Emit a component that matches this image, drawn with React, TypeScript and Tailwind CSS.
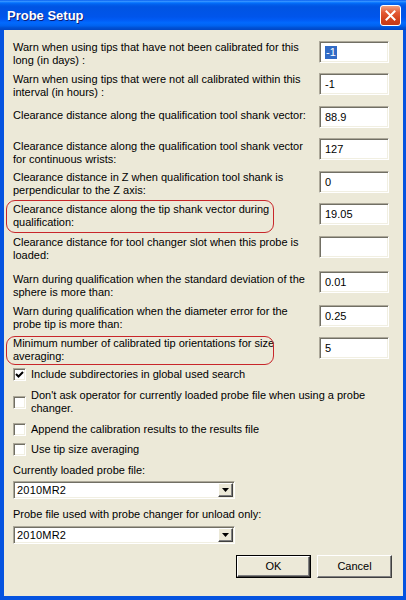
import React from 'react';

interface Field {
  lines: string[];
  value: string;
  rowClass: string;
  labelClass: string;
  selected?: boolean;
  outline?: string;
}

const fields: Field[] = [
  {
    lines: ['Warn when using tips that have not been calibrated for this', 'long (in days) :'],
    value: '-1',
    rowClass: 'h-[32px]',
    labelClass: 'pt-0',
    selected: true,
  },
  {
    lines: ['Warn when using tips that were not all calibrated within this', 'interval (in hours) :'],
    value: '-1',
    rowClass: 'h-[33px]',
    labelClass: 'pt-0',
  },
  {
    lines: ['Clearance distance along the qualification tool shank vector:'],
    value: '88.9',
    rowClass: 'h-[32px]',
    labelClass: 'pt-[3px]',
  },
  {
    lines: ['Clearance distance along the qualification tool shank vector', 'for continuous wrists:'],
    value: '127',
    rowClass: 'h-[33px]',
    labelClass: 'pt-[2px]',
  },
  {
    lines: ['Clearance distance in Z when qualification tool shank is', 'perpendicular to the Z axis:'],
    value: '0',
    rowClass: 'h-[32px]',
    labelClass: 'pt-0',
  },
  {
    lines: ['Clearance distance along the tip shank vector during', 'qualification:'],
    value: '19.05',
    rowClass: 'h-[33px]',
    labelClass: 'pt-0',
    outline: 'top-[-3px] h-[33px]',
  },
  {
    lines: ['Clearance distance for tool changer slot when this probe is', 'loaded:'],
    value: '',
    rowClass: 'h-[35px]',
    labelClass: 'pt-0',
  },
  {
    lines: ['Warn during qualification when the standard deviation of the', 'sphere is more than:'],
    value: '0.01',
    rowClass: 'h-[34px]',
    labelClass: 'pt-[2px]',
  },
  {
    lines: ['Warn during qualification when the diameter error for the', 'probe tip is more than:'],
    value: '0.25',
    rowClass: 'h-[32px]',
    labelClass: 'pt-0',
  },
  {
    lines: ['Minimum number of calibrated tip orientations for size', 'averaging:'],
    value: '5',
    rowClass: 'h-[31px]',
    labelClass: 'pt-0',
    outline: 'top-[-1px] h-[29px]',
  },
];

const sunken =
  'border border-t-[#aca899] border-l-[#aca899] border-r-white border-b-white shadow-[inset_1px_1px_0_#716f64,inset_-1px_-1px_0_#f1efe2]';

function Checkbox({ checked }: { checked?: boolean }) {
  return (
    <div className={`w-[13px] h-[13px] shrink-0 bg-white ${sunken} flex items-center justify-center`}>
      {checked && (
        <svg width="9" height="9" viewBox="0 0 9 9">
          <path d="M1 4 L3.5 6.5 L8 2" fill="none" stroke="#000" strokeWidth="2" />
        </svg>
      )}
    </div>
  );
}

function Combo({ value }: { value: string }) {
  return (
    <div className={`w-[222px] h-[18px] bg-white ${sunken} flex items-center`}>
      <span className="flex-1 pl-[3px] leading-[13px] tracking-[0.2px]">{value}</span>
      <div className="w-[15px] h-[14px] mr-[1px] bg-[#ece9d8] border border-t-white border-l-white border-r-[#404040] border-b-[#404040] shadow-[inset_-1px_-1px_0_#808080] flex items-center justify-center">
        <svg width="7" height="4" viewBox="0 0 7 4">
          <path d="M0 0 H7 L3.5 4 Z" fill="#000" />
        </svg>
      </div>
    </div>
  );
}

function Button({ label, isDefault }: { label: string; isDefault?: boolean }) {
  return (
    <div
      className={`w-[75px] h-[23px] flex items-center justify-center bg-[#ece9d8] ${
        isDefault ? 'border border-black' : ''
      }`}
    >
      <div className="w-full h-full flex items-center justify-center border border-t-white border-l-white border-r-[#404040] border-b-[#404040] shadow-[inset_-1px_-1px_0_#808080]">
        {label}
      </div>
    </div>
  );
}

export default function App() {
  return (
    <div className="w-[406px] h-[600px] flex flex-col bg-[#0553e0] text-[11px] leading-[13px] text-black font-['Liberation_Sans',Arial,sans-serif]">
      {/* Title bar */}
      <div className="h-[30px] shrink-0 flex items-center justify-between bg-[linear-gradient(180deg,#0058ee_0%,#3a93ff_4%,#288eff_6%,#127dff_8%,#036ffc_10%,#0262ee_14%,#0057e5_20%,#0054e3_24%,#0055eb_56%,#005bf5_66%,#026afe_76%,#0062ef_86%,#0052d6_92%,#0046c4_100%)]">
        <span className="pl-[7px] text-white font-bold text-[13px] [text-shadow:1px_1px_0_#0a1e7a]">
          Probe Setup
        </span>
        <div className="mr-[5px] w-[21px] h-[21px] rounded-[3px] border border-white bg-[linear-gradient(180deg,#f0a080_0%,#e35a35_35%,#d2421c_70%,#c53a18_100%)] flex items-center justify-center">
          <svg width="11" height="11" viewBox="0 0 11 11">
            <path d="M1.5 1.5 L9.5 9.5 M9.5 1.5 L1.5 9.5" stroke="#fff" strokeWidth="2" strokeLinecap="square" />
          </svg>
        </div>
      </div>

      {/* Body */}
      <div className="flex-1 ml-[4px] mr-[3px] mb-[4px] bg-[#ece9d8] pt-[11px] pl-[9px] pr-[11px] flex flex-col">
        {fields.map((f, i) => (
          <div key={i} className={`relative flex items-start pr-[3px] ${f.rowClass}`}>
            {f.outline && (
              <div
                className={`absolute left-[-7px] w-[268px] rounded-[9px] border border-[#c8262a] ${f.outline}`}
              />
            )}
            <div className={`flex-1 ${f.labelClass}`}>
              {f.lines.map((l, j) => (
                <div key={j} className="whitespace-nowrap">
                  {l}
                </div>
              ))}
            </div>
            <div className={`w-[70px] h-[22px] bg-white ${sunken} flex items-center pl-[5px]`}>
              {f.selected ? (
                <span className="bg-[#316ac5] text-white px-[1px]">{f.value}</span>
              ) : (
                <span>{f.value}</span>
              )}
            </div>
          </div>
        ))}

        {/* Check boxes */}
        <div className="flex items-center gap-[5px] h-[13px]">
          <Checkbox checked />
          <span>Include subdirectories in global used search</span>
        </div>
        <div className="flex items-center gap-[5px] h-[26px] mt-[8px]">
          <Checkbox />
          <span>
            Don't ask operator for currently loaded probe file when using a probe
            <br />
            changer.
          </span>
        </div>
        <div className="flex items-center gap-[5px] h-[13px] mt-[8px]">
          <Checkbox />
          <span>Append the calibration results to the results file</span>
        </div>
        <div className="flex items-center gap-[5px] h-[13px] mt-[7px]">
          <Checkbox />
          <span>Use tip size averaging</span>
        </div>

        {/* Probe files */}
        <div className="mt-[8px]">Currently loaded probe file:</div>
        <div className="mt-[4px]">
          <Combo value="2010MR2" />
        </div>
        <div className="mt-[9px]">Probe file used with probe changer for unload only:</div>
        <div className="mt-[5px]">
          <Combo value="2010MR2" />
        </div>

        {/* Buttons */}
        <div className="mt-[11px] flex justify-end gap-[6px]">
          <Button label="OK" isDefault />
          <Button label="Cancel" />
        </div>
      </div>
    </div>
  );
}
